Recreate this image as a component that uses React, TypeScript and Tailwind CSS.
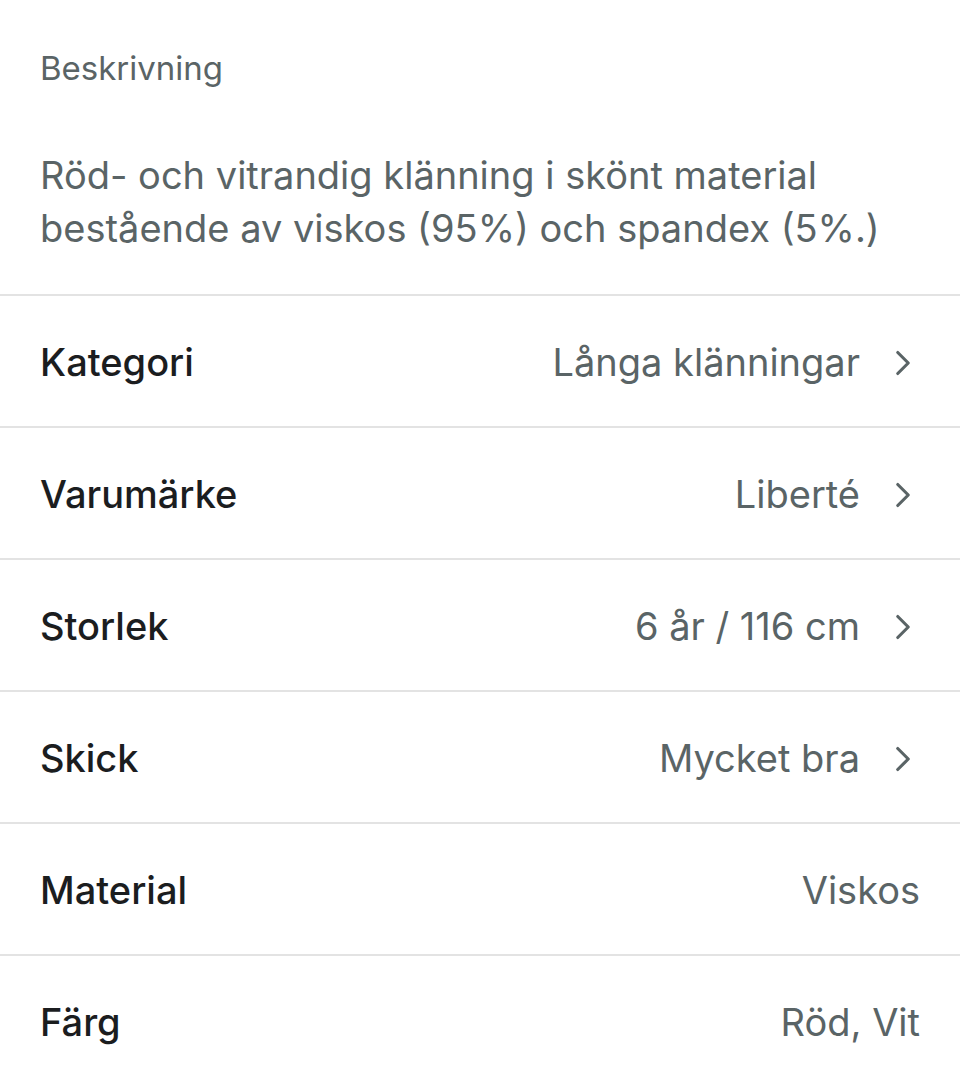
import { ChevronRight } from "lucide-react";

type DetailRow = {
  label: string;
  value: string;
  link?: boolean;
};

const rows: DetailRow[] = [
  { label: "Kategori", value: "Långa klänningar", link: true },
  { label: "Varumärke", value: "Liberté", link: true },
  { label: "Storlek", value: "6 år / 116 cm", link: true },
  { label: "Skick", value: "Mycket bra", link: true },
  { label: "Material", value: "Viskos" },
  { label: "Färg", value: "Röd, Vit" },
];

export default function App() {
  return (
    <div className="min-h-screen bg-white font-['Inter','Noto_Sans',sans-serif] antialiased">
      <section className="border-b-2 border-[#e3e3e3] px-10 pb-[39px] pt-[46px]">
        <h2 className="text-[33px] leading-[44px] text-[#5a6466]">Beskrivning</h2>
        <p className="mt-[59px] text-[38px] leading-[53px] text-[#5a6466]">
          Röd- och vitrandig klänning i skönt material bestående av viskos (95%) och spandex (5%.)
        </p>
      </section>
      <ul>
        {rows.map((row) => (
          <li
            className="flex h-[132px] items-center justify-between border-b-2 border-[#e3e3e3] px-10 pt-[3px]"
            key={row.label}
          >
            <span className="text-[38px] font-medium text-[#1b1d1f]">{row.label}</span>
            <span className="flex items-center text-[38px] text-[#5a6466]">
              {row.value}
              {row.link && (
                <ChevronRight className="ml-[22px] -mr-[4px] size-[42px]" strokeWidth={1.8} />
              )}
            </span>
          </li>
        ))}
      </ul>
    </div>
  );
}
